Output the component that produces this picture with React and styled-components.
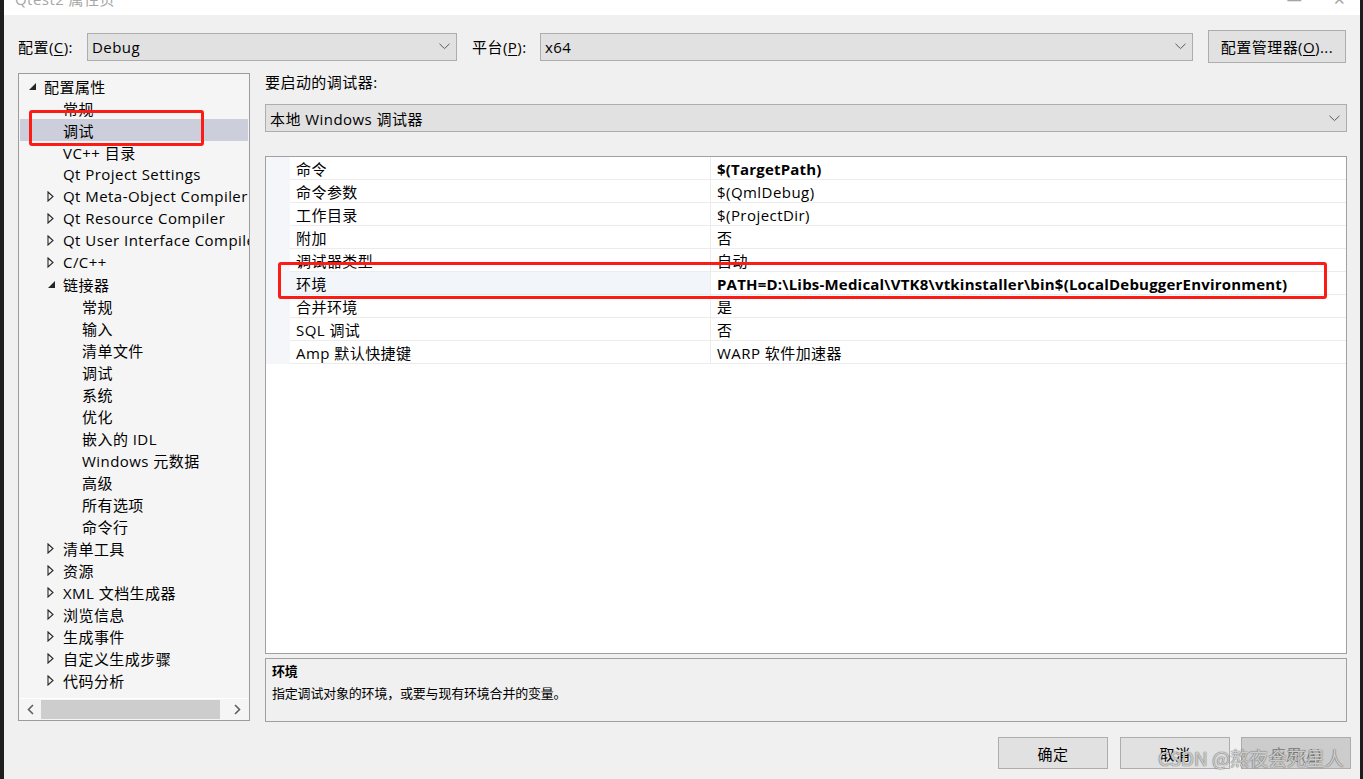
import React from "react";
import styled, { createGlobalStyle } from "styled-components";

const FONT = '"Open Sans", "Noto Sans CJK SC", sans-serif';

const GlobalStyle = createGlobalStyle`
  html, body {
    margin: 0;
    padding: 0;
    background: #1e1e1e;
    font-family: ${FONT};
    letter-spacing: 0.45px;
    overflow: hidden;
  }
`;

// tree entries: level, text, arrow ("open" | "closed"), selected
const TREE = [
  { l: 0, t: "配置属性", a: "open" },
  { l: 1, t: "常规" },
  { l: 1, t: "调试", sel: true },
  { l: 1, t: "VC++ 目录" },
  { l: 1, t: "Qt Project Settings" },
  { l: 1, t: "Qt Meta-Object Compiler", a: "closed" },
  { l: 1, t: "Qt Resource Compiler", a: "closed" },
  { l: 1, t: "Qt User Interface Compiler", a: "closed" },
  { l: 1, t: "C/C++", a: "closed" },
  { l: 1, t: "链接器", a: "open" },
  { l: 2, t: "常规" },
  { l: 2, t: "输入" },
  { l: 2, t: "清单文件" },
  { l: 2, t: "调试" },
  { l: 2, t: "系统" },
  { l: 2, t: "优化" },
  { l: 2, t: "嵌入的 IDL" },
  { l: 2, t: "Windows 元数据" },
  { l: 2, t: "高级" },
  { l: 2, t: "所有选项" },
  { l: 2, t: "命令行" },
  { l: 1, t: "清单工具", a: "closed" },
  { l: 1, t: "资源", a: "closed" },
  { l: 1, t: "XML 文档生成器", a: "closed" },
  { l: 1, t: "浏览信息", a: "closed" },
  { l: 1, t: "生成事件", a: "closed" },
  { l: 1, t: "自定义生成步骤", a: "closed" },
  { l: 1, t: "代码分析", a: "closed" },
];

const PROPS = [
  { n: "命令", v: "$(TargetPath)", bold: true },
  { n: "命令参数", v: "$(QmlDebug)" },
  { n: "工作目录", v: "$(ProjectDir)" },
  { n: "附加", v: "否" },
  { n: "调试器类型", v: "自动" },
  {
    n: "环境",
    v: "PATH=D:\\Libs-Medical\\VTK8\\vtkinstaller\\bin$(LocalDebuggerEnvironment)",
    bold: true,
    sel: true,
  },
  { n: "合并环境", v: "是" },
  { n: "SQL 调试", v: "否" },
  { n: "Amp 默认快捷键", v: "WARP 软件加速器" },
];

const Page = styled.div`
  display: flex;
  height: 779px;
  width: 1363px;
  background: #1e1e1e;
`;

const Window = styled.div`
  position: relative;
  margin-left: 4px;
  width: 1356px;
  height: 779px;
  background: #f0f0f0;
  display: flex;
  flex-direction: column;
  overflow: hidden;
`;

const TitleBar = styled.div`
  height: 15px;
  background: #ffffff;
  display: flex;
  align-items: flex-end;
  justify-content: space-between;
  overflow: hidden;
  padding: 0 14px 0 11px;
`;

const TitleText = styled.div`
  font-size: 15px;
  line-height: 20px;
  color: #a6a6a6;
  margin-bottom: 6px;
`;

const Body = styled.div`
  flex: 1;
  display: flex;
  flex-direction: column;
  padding: 15px 13px 0 14px;
`;

const TopRow = styled.div`
  display: flex;
  align-items: center;
  height: 33px;
`;

const FieldLabel = styled.div`
  width: ${(p) => p.$w}px;
  margin-left: ${(p) => p.$ml || 0}px;
  font-size: 15px;
  color: #000;
  white-space: nowrap;
`;

const U = styled.span`
  text-decoration: underline;
  text-underline-offset: 2px;
`;

const Select = styled.div`
  box-sizing: border-box;
  width: ${(p) => (p.$w ? `${p.$w}px` : "100%")};
  height: 28px;
  border: 1px solid #adadad;
  background: #e1e1e1;
  display: flex;
  align-items: center;
  justify-content: space-between;
  padding: 0 6px 0 4px;
  font-size: 15px;
  color: #000;
`;

const Chevron = () => (
  <svg width="11" height="7" viewBox="0 0 11 7">
    <path d="M0.5 0.8 L5.5 5.6 L10.5 0.8" fill="none" stroke="#5a5a5a" strokeWidth="1" />
  </svg>
);

const Button = styled.div`
  box-sizing: border-box;
  width: ${(p) => p.$w}px;
  height: ${(p) => p.$h}px;
  margin-left: ${(p) => p.$ml || 0}px;
  border: 1px solid #adadad;
  background: ${(p) => (p.$disabled ? "#cccccc" : "#e1e1e1")};
  color: ${(p) => (p.$disabled ? "#838383" : "#000")};
  display: flex;
  align-items: center;
  justify-content: center;
  font-size: 15px;
`;

const Main = styled.div`
  display: grid;
  grid-template-columns: 232px 1082px;
  column-gap: 15px;
  margin-top: 10px;
`;

const Tree = styled.div`
  box-sizing: border-box;
  height: 648px;
  border: 1px solid #9c9c9c;
  background: #f5f5f5;
  display: flex;
  flex-direction: column;
`;

const TreeRows = styled.div`
  flex: 1;
  overflow: hidden;
  padding-top: 1px;
`;

const TreeRow = styled.div`
  height: 22px;
  display: flex;
  align-items: center;
  margin: 0 1px;
  padding-left: ${(p) => 8 + p.$level * 19}px;
  background: ${(p) => (p.$sel ? "#cccedb" : "transparent")};
  font-size: 15px;
  color: #000;
  white-space: nowrap;
`;

const ArrowBox = styled.span`
  width: 16px;
  flex: none;
  display: flex;
  align-items: center;
`;

const TreeArrow = ({ kind }) => {
  if (kind === "open")
    return (
      <svg width="9" height="9" viewBox="0 0 9 9">
        <path d="M8 1 L8 8 L1 8 Z" fill="#262626" />
      </svg>
    );
  if (kind === "closed")
    return (
      <svg width="7" height="11" viewBox="0 0 7 11">
        <path d="M1 1 L6 5.5 L1 10 Z" fill="none" stroke="#262626" strokeWidth="1.1" />
      </svg>
    );
  return null;
};

const HScroll = styled.div`
  height: 20px;
  margin: 0 1px 1px;
  border-top: 1px solid #ffffff;
  display: flex;
  align-items: center;
`;

const ScrollBtn = styled.div`
  width: 22px;
  height: 20px;
  display: flex;
  align-items: center;
  justify-content: center;
`;

const ScrollTrack = styled.div`
  flex: 1;
  height: 19px;
  padding-right: 8px;
  display: flex;
`;

const ScrollThumb = styled.div`
  width: 179px;
  height: 19px;
  background: #cdcdcd;
`;

const RightCol = styled.div`
  display: flex;
  flex-direction: column;
`;

const SectionLabel = styled.div`
  font-size: 15px;
  line-height: 18px;
  color: #000;
  margin-bottom: 13px;
`;

const Grid = styled.div`
  box-sizing: border-box;
  margin-top: 24px;
  height: 498px;
  border: 1px solid #a0a0a0;
  background: #ffffff;
`;

const PropRow = styled.div`
  display: grid;
  grid-template-columns: 24px 421px 1fr;
  height: 23px;
`;

const Margin = styled.div`
  background: #f4f6fa;
`;

const Cell = styled.div`
  box-sizing: border-box;
  border-bottom: 1px solid #ececec;
  border-right: ${(p) => (p.$divider ? "1px solid #ececec" : "none")};
  background: ${(p) => (p.$sel ? "#f2f5fa" : "#ffffff")};
  padding: 1px 0 0 6px;
  display: flex;
  align-items: center;
  font-size: 15px;
  font-weight: ${(p) => (p.$bold ? 700 : 400)};
  letter-spacing: ${(p) => (p.$bold ? "0.2px" : "0.45px")};
  color: #000;
  white-space: nowrap;
  overflow: hidden;
`;

const Desc = styled.div`
  box-sizing: border-box;
  margin-top: 4px;
  height: 64px;
  border: 1px solid #a0a0a0;
  padding: 2px 6px;
  font-size: 13px;
  letter-spacing: -0.2px;
  color: #000;
`;

const DescTitle = styled.div`
  font-weight: 700;
  line-height: 21px;
`;

const DescText = styled.div`
  line-height: 23px;
`;

const Footer = styled.div`
  display: flex;
  justify-content: flex-end;
  margin-top: 15px;
  margin-right: -4px;
`;

const Annotation = styled.div`
  position: absolute;
  left: ${(p) => p.$x}px;
  top: ${(p) => p.$y}px;
  width: ${(p) => p.$w}px;
  height: ${(p) => p.$h}px;
  box-sizing: border-box;
  border: 3px solid #fb1c16;
  border-radius: 3px;
  pointer-events: none;
`;

const Watermark = styled.div`
  position: absolute;
  left: 1154px;
  top: 745px;
  font-family: "Noto Sans CJK SC", sans-serif;
  font-size: 19px;
  line-height: 26px;
  letter-spacing: 0;
  color: rgba(245, 245, 245, 0.75);
  text-shadow: 0 0 1px rgba(60, 60, 60, 0.8), 0 0 1px rgba(60, 60, 60, 0.6);
  white-space: nowrap;
`;

export default function App() {
  return (
    <Page>
      <GlobalStyle />
      <Window>
        <TitleBar>
          <TitleText>Qtest2 属性页</TitleText>
          <TitleText>—&nbsp;&nbsp;&nbsp;&nbsp;&nbsp;&nbsp;&nbsp;✕</TitleText>
        </TitleBar>
        <Body>
          <TopRow>
            <FieldLabel $w={69}>
              配置(<U>C</U>):
            </FieldLabel>
            <Select $w={370}>
              <span>Debug</span>
              <Chevron />
            </Select>
            <FieldLabel $w={68} $ml={15}>
              平台(<U>P</U>):
            </FieldLabel>
            <Select $w={653}>
              <span>x64</span>
              <Chevron />
            </Select>
            <Button $w={138} $h={33} $ml={15}>
              配置管理器(<U>O</U>)...
            </Button>
          </TopRow>

          <Main>
            <Tree>
              <TreeRows>
                {TREE.map((r, i) => (
                  <TreeRow key={i} $level={r.l} $sel={r.sel}>
                    <ArrowBox>
                      <TreeArrow kind={r.a} />
                    </ArrowBox>
                    {r.t}
                  </TreeRow>
                ))}
              </TreeRows>
              <HScroll>
                <ScrollBtn>
                  <svg width="7" height="11" viewBox="0 0 7 11">
                    <path d="M6 1 L1.5 5.5 L6 10" fill="none" stroke="#606060" strokeWidth="1.6" />
                  </svg>
                </ScrollBtn>
                <ScrollTrack>
                  <ScrollThumb />
                </ScrollTrack>
                <ScrollBtn>
                  <svg width="7" height="11" viewBox="0 0 7 11">
                    <path d="M1 1 L5.5 5.5 L1 10" fill="none" stroke="#606060" strokeWidth="1.6" />
                  </svg>
                </ScrollBtn>
              </HScroll>
            </Tree>

            <RightCol>
              <SectionLabel>要启动的调试器:</SectionLabel>
              <Select>
                <span>本地 Windows 调试器</span>
                <Chevron />
              </Select>
              <Grid>
                {PROPS.map((p, i) => (
                  <PropRow key={i}>
                    <Margin />
                    <Cell $divider $sel={p.sel}>
                      {p.n}
                    </Cell>
                    <Cell $bold={p.bold}>{p.v}</Cell>
                  </PropRow>
                ))}
              </Grid>
              <Desc>
                <DescTitle>环境</DescTitle>
                <DescText>指定调试对象的环境，或要与现有环境合并的变量。</DescText>
              </Desc>
            </RightCol>
          </Main>

          <Footer>
            <Button $w={110} $h={32}>
              确定
            </Button>
            <Button $w={110} $h={32} $ml={12}>
              取消
            </Button>
            <Button $w={110} $h={32} $ml={11} $disabled>
              应用(<U>A</U>)
            </Button>
          </Footer>
        </Body>

        <Annotation $x={25} $y={110} $w={175} $h={36} />
        <Annotation $x={274} $y={262} $w={1049} $h={37} />
        <Watermark>CSDN @熬夜会死星人</Watermark>
      </Window>
    </Page>
  );
}
